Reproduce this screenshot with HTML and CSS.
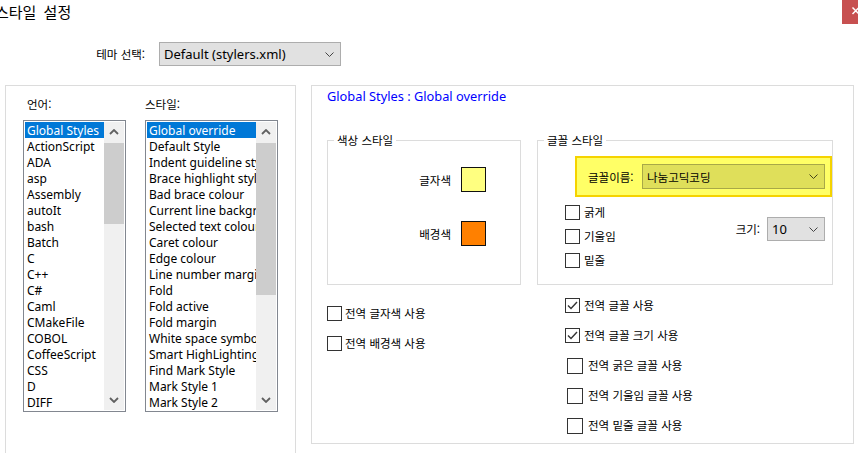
FILE: index.html
```html
<!DOCTYPE html>
<html lang="ko">
<head>
<meta charset="utf-8">
<title>스타일 설정</title>
<link rel="stylesheet" href="styles.css">
</head>
<body>
<div class="titlebar">
  <div class="title">스타일 설정</div>
  <div class="close"><svg width="16" height="24" viewBox="0 0 16 24"><path d="M10.5 7.5 L17 14 M10.5 14 L17 7.5" stroke="#fff" stroke-width="1.5" fill="none"/></svg></div>
</div>

<div class="theme-row">
  <span class="theme-label ko">테마 선택:</span>
  <div class="select theme-select">
    <span>Default (stylers.xml)</span>
    <svg class="chev" width="9" height="5" viewBox="0 0 9 5"><path d="M0.5 0.5 L4.5 4.5 L8.5 0.5" stroke="#444" stroke-width="1" fill="none"/></svg>
  </div>
</div>

<div class="main">
  <div class="group left-group">
    <div class="list-labels ko">
      <span class="lbl-lang">언어:</span>
      <span class="lbl-style">스타일:</span>
    </div>
    <div class="lists">
      <div class="listbox lang">
        <div class="items">
          <div class="item sel">Global Styles</div>
          <div class="item">ActionScript</div>
          <div class="item">ADA</div>
          <div class="item">asp</div>
          <div class="item">Assembly</div>
          <div class="item">autoIt</div>
          <div class="item">bash</div>
          <div class="item">Batch</div>
          <div class="item">C</div>
          <div class="item">C++</div>
          <div class="item">C#</div>
          <div class="item">Caml</div>
          <div class="item">CMakeFile</div>
          <div class="item">COBOL</div>
          <div class="item">CoffeeScript</div>
          <div class="item">CSS</div>
          <div class="item">D</div>
          <div class="item">DIFF</div>
        </div>
        <div class="scrollbar">
          <div class="sb-btn"><svg width="10" height="6" viewBox="0 0 10 6"><path d="M1 5 L5 1 L9 5" stroke="#606060" stroke-width="1.8" fill="none"/></svg></div>
          <div class="sb-track"><div class="sb-thumb lang-thumb"></div></div>
          <div class="sb-btn"><svg width="10" height="6" viewBox="0 0 10 6"><path d="M1 1 L5 5 L9 1" stroke="#606060" stroke-width="1.8" fill="none"/></svg></div>
        </div>
      </div>
      <div class="listbox style">
        <div class="items">
          <div class="item sel">Global override</div>
          <div class="item">Default Style</div>
          <div class="item">Indent guideline style</div>
          <div class="item">Brace highlight style</div>
          <div class="item">Bad brace colour</div>
          <div class="item">Current line background colour</div>
          <div class="item">Selected text colour</div>
          <div class="item">Caret colour</div>
          <div class="item">Edge colour</div>
          <div class="item">Line number margin</div>
          <div class="item">Fold</div>
          <div class="item">Fold active</div>
          <div class="item">Fold margin</div>
          <div class="item">White space symbol</div>
          <div class="item">Smart HighLighting</div>
          <div class="item">Find Mark Style</div>
          <div class="item">Mark Style 1</div>
          <div class="item">Mark Style 2</div>
        </div>
        <div class="scrollbar">
          <div class="sb-btn"><svg width="10" height="6" viewBox="0 0 10 6"><path d="M1 5 L5 1 L9 5" stroke="#606060" stroke-width="1.8" fill="none"/></svg></div>
          <div class="sb-track"><div class="sb-thumb style-thumb"></div></div>
          <div class="sb-btn"><svg width="10" height="6" viewBox="0 0 10 6"><path d="M1 1 L5 5 L9 1" stroke="#606060" stroke-width="1.8" fill="none"/></svg></div>
        </div>
      </div>
    </div>
  </div>

  <div class="group right-group">
    <div class="heading">Global Styles : Global override</div>
    <div class="panels">
      <div class="box color-box">
        <span class="box-title ko">색상 스타일</span>
        <div class="color-grid ko">
          <span class="clabel">글자색</span><span class="swatch fg"></span>
          <span class="clabel">배경색</span><span class="swatch bg"></span>
        </div>
      </div>
      <div class="box font-box">
        <span class="box-title ko">글꼴 스타일</span>
        <div class="highlight">
          <span class="font-label ko">글꼴이름:</span>
          <div class="select font-select">
            <span class="ko">나눔고딕코딩</span>
            <svg class="chev" width="9" height="5" viewBox="0 0 9 5"><path d="M0.5 0.5 L4.5 4.5 L8.5 0.5" stroke="#44441a" stroke-width="1" fill="none"/></svg>
          </div>
        </div>
        <div class="font-lower">
          <div class="check-col">
            <label class="check ko"><span class="cb"></span>굵게</label>
            <label class="check ko"><span class="cb"></span>기울임</label>
            <label class="check ko"><span class="cb"></span>밑줄</label>
          </div>
          <div class="size-row">
            <span class="ko">크기:</span>
            <div class="select size-select">
              <span>10</span>
              <svg class="chev" width="9" height="5" viewBox="0 0 9 5"><path d="M0.5 0.5 L4.5 4.5 L8.5 0.5" stroke="#444" stroke-width="1" fill="none"/></svg>
            </div>
          </div>
        </div>
      </div>
      <div class="bottom-left">
        <label class="check ko tight"><span class="cb"></span>전역 글자색 사용</label>
        <label class="check ko tight"><span class="cb"></span>전역 배경색 사용</label>
      </div>
      <div class="bottom-right">
        <label class="check ko"><span class="cb checked"><svg width="13" height="13" viewBox="0 0 13 13"><path d="M2 6.5 L5 9.5 L11 3" stroke="#333" stroke-width="1.4" fill="none"/></svg></span>전역 글꼴 사용</label>
        <label class="check ko"><span class="cb checked"><svg width="13" height="13" viewBox="0 0 13 13"><path d="M2 6.5 L5 9.5 L11 3" stroke="#333" stroke-width="1.4" fill="none"/></svg></span>전역 글꼴 크기 사용</label>
        <label class="check ko shift"><span class="cb big"></span>전역 굵은 글꼴 사용</label>
        <label class="check ko shift"><span class="cb big"></span>전역 기울임 글꼴 사용</label>
        <label class="check ko shift"><span class="cb big"></span>전역 밑줄 글꼴 사용</label>
      </div>
    </div>
  </div>
</div>
</body>
</html>
```

FILE: styles.css
```css
* { box-sizing: border-box; }
html, body { margin: 0; padding: 0; }
body {
  width: 858px;
  height: 453px;
  overflow: hidden;
  background: #fff;
  color: #000;
  font-family: "Noto Sans", "Noto Sans CJK KR", sans-serif;
  font-size: 12px;
}
.ko { font-family: "Noto Sans CJK KR", sans-serif; font-size: 11.5px; }

.titlebar { display: flex; justify-content: space-between; height: 24px; }
.title {
  font-family: "Noto Sans CJK KR", sans-serif;
  font-size: 15px;
  line-height: 24px;
  margin-left: -5px;
  word-spacing: 3px;
}
.close { width: 16px; height: 24px; background: #c75050; overflow: hidden; }
.close svg { display: block; }

.theme-row { display: flex; align-items: center; height: 24px; margin-top: 18px; padding-left: 80px; }
.theme-label { width: 65px; text-align: right; margin-right: 14px; }
.select {
  display: flex;
  align-items: center;
  justify-content: space-between;
  background: #e1e1e1;
  border: 1px solid #adadad;
  padding: 0 6px 0 4px;
}
.chev { display: block; flex: none; }
.theme-select { width: 182px; height: 24px; font-size: 13px; }

.main { display: flex; margin-top: 19px; }
.group { border: 1px solid #dcdcdc; }

.left-group { margin-left: 5px; width: 291px; height: 368px; border-bottom: none; padding: 10px 0 0 17px; }
.list-labels { display: flex; height: 16px; line-height: 16px; margin-bottom: 8px; }
.lbl-lang { width: 122px; padding-left: 4px; }
.lists { display: flex; gap: 19px; }
.listbox { display: flex; height: 292px; border: 1px solid #828790; padding: 1px; background: #fff; }
.lang { width: 103px; }
.style { width: 133px; }
.items { flex: 1; overflow: hidden; }
.item { height: 16px; line-height: 17px; padding-left: 2px; white-space: nowrap; }
.item.sel { background: #0078d7; color: #fff; }
.scrollbar { width: 20px; display: flex; flex-direction: column; background: #f0f0f0; }
.sb-btn { height: 20px; display: flex; align-items: center; justify-content: center; flex: none; }
.sb-track { flex: 1; padding-top: 1px; }
.sb-thumb { background: #cdcdcd; }
.lang-thumb { height: 81px; }
.style-thumb { height: 152px; }

.right-group { margin-left: 15px; width: 543px; height: 359px; padding: 2px 0 0 15px; }
.heading { color: #0000ff; height: 16px; line-height: 16px; font-size: 12.8px; }
.panels { display: grid; grid-template-columns: 194px 296px; column-gap: 16px; margin-top: 36px; }
.box { position: relative; border: 1px solid #dcdcdc; height: 145px; }
.box-title { position: absolute; top: -9px; left: 6px; padding: 0 3px; background: #fff; line-height: 16px; }

.color-grid {
  display: grid;
  grid-template-columns: 123px 25px;
  column-gap: 10px;
  row-gap: 29px;
  align-items: center;
  padding-top: 26px;
}
.clabel { text-align: right; }
.swatch { width: 25px; height: 25px; border: 1px solid #111; }
.swatch.fg { background: #ffff80; }
.swatch.bg { background: #ff8000; }

.highlight {
  display: flex;
  align-items: center;
  height: 41px;
  margin: 15px 0 0 37px;
  padding-left: 11px;
  background: #ffff66;
  border: 2px solid #f5d300;
}
.font-label { width: 54px; }
.font-select { width: 183px; height: 25px; background: #dfdf5a; border-color: #a8a848; }
.font-lower { display: flex; justify-content: space-between; align-items: flex-start; margin-top: 8px; padding: 0 7px 0 27px; }
.check-col { display: flex; flex-direction: column; gap: 9px; }
.check { display: flex; align-items: center; gap: 4px; height: 15px; line-height: 15px; white-space: nowrap; }
.check.tight { gap: 3px; }
.cb { width: 15px; height: 15px; border: 1px solid #333; background: #fff; flex: none; display: flex; align-items: center; justify-content: center; }
.cb.big { width: 16px; height: 16px; }
.check.shift { margin-left: 2px; gap: 5px; }
.size-row { display: flex; align-items: center; gap: 7px; margin-top: 12px; }
.size-select { width: 58px; height: 24px; font-size: 13px; }

.bottom-left { display: flex; flex-direction: column; gap: 15px; padding-top: 21px; }
.bottom-right { display: flex; flex-direction: column; gap: 15px; padding: 13px 0 0 28px; }
```
